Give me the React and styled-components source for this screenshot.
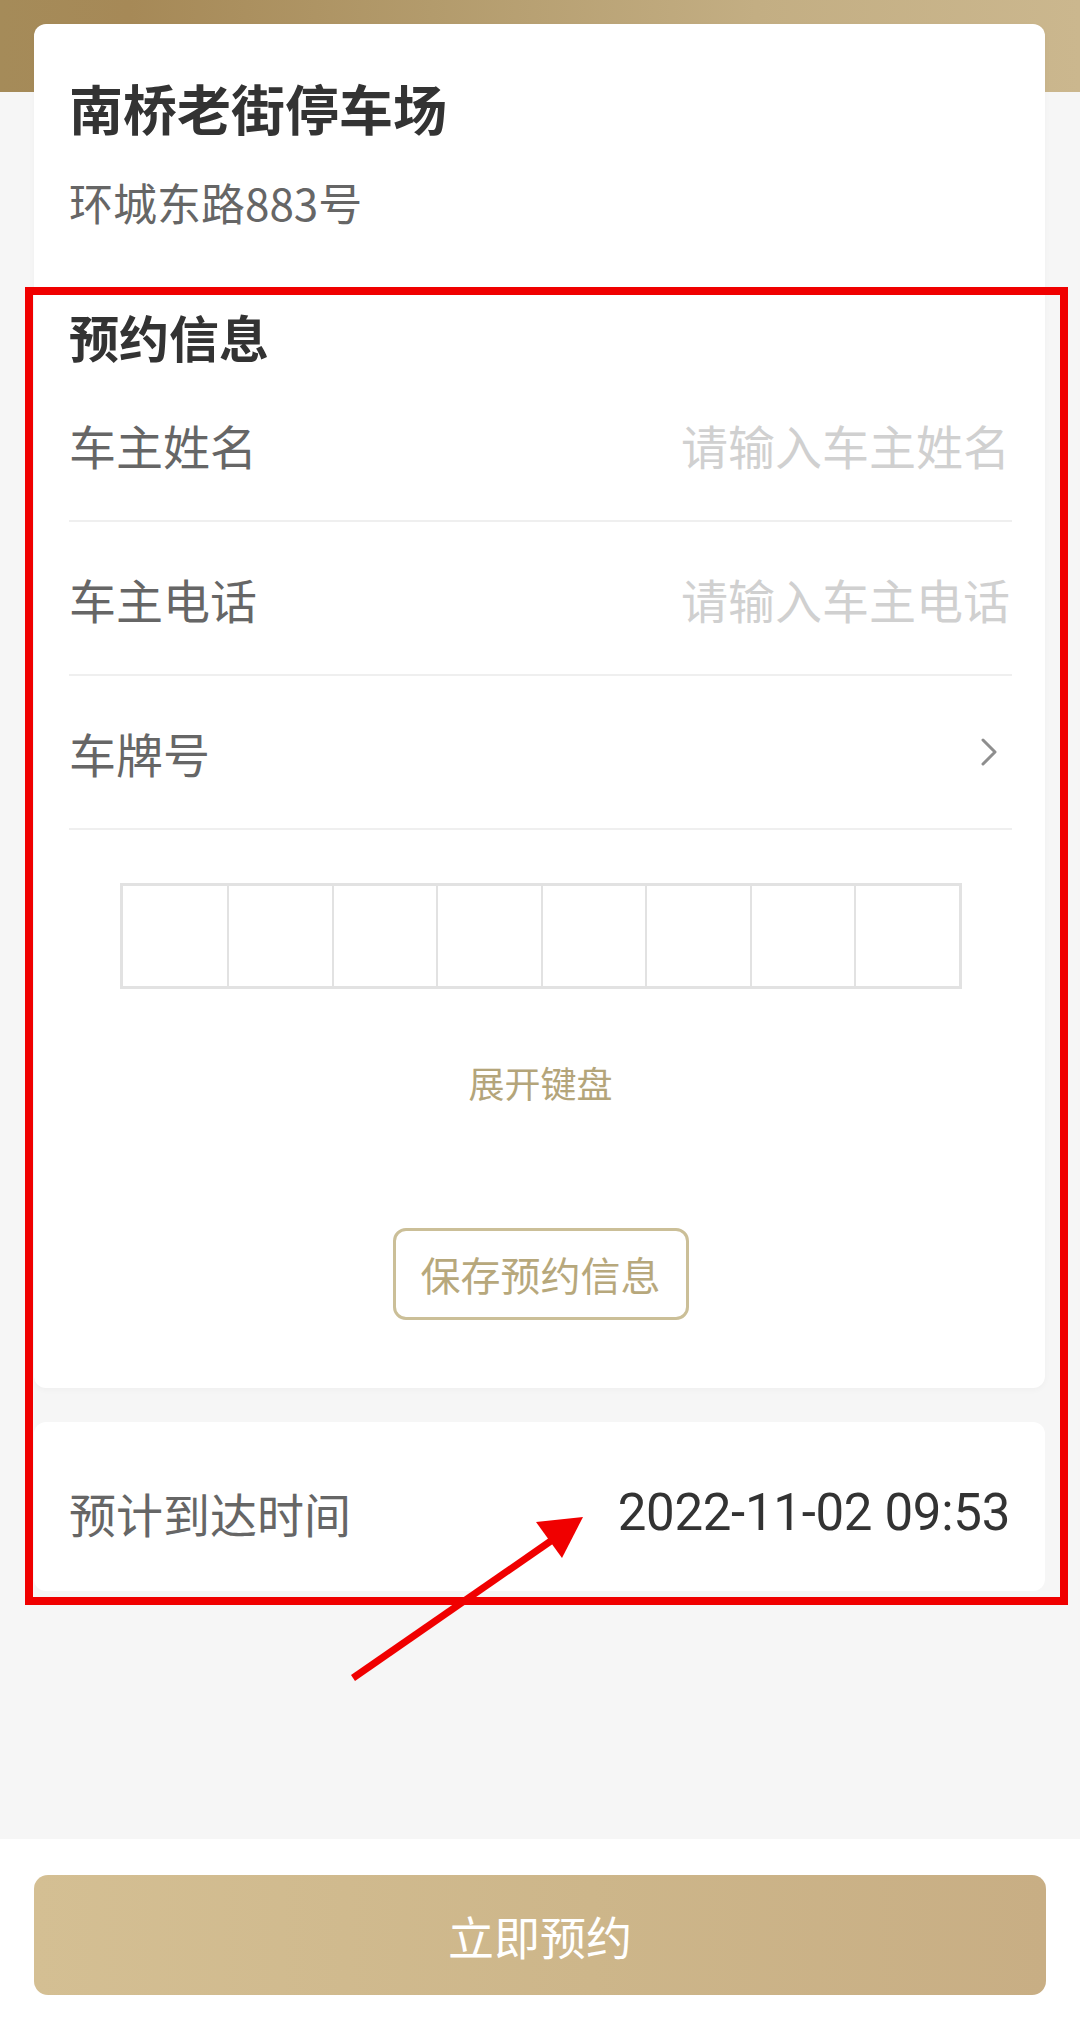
import React from 'react';
import styled, { createGlobalStyle } from 'styled-components';

const FONT = `"Noto Sans CJK SC", "Noto Sans", sans-serif`;

const GlobalStyle = createGlobalStyle`
  html, body {
    margin: 0;
    padding: 0;
    background: #f6f6f6;
    font-family: ${FONT};
  }
  * {
    box-sizing: border-box;
  }
`;

const fields = [
  { label: '车主姓名', placeholder: '请输入车主姓名' },
  { label: '车主电话', placeholder: '请输入车主电话' },
];

const Chevron = () => (
  <ChevronIcon width="17" height="28" viewBox="0 0 17 28" fill="none">
    <polyline
      points="2,2 14,14 2,26"
      stroke="#8e8e8e"
      strokeWidth="3"
      strokeLinecap="round"
      strokeLinejoin="round"
    />
  </ChevronIcon>
);

const Annotation = () => (
  <Overlay width="1080" height="2033" viewBox="0 0 1080 2033">
    <rect x="29" y="291" width="1035" height="1310" fill="none" stroke="#f00000" strokeWidth="8" />
    <line x1="353" y1="1678" x2="558" y2="1536" stroke="#f00000" strokeWidth="7" />
    <polygon points="583,1517 536,1522 562,1558" fill="#f00000" />
  </Overlay>
);

const App = () => {
  return (
    <Page>
      <GlobalStyle />
      <Main>
        <Card>
          <Title>南桥老街停车场</Title>
          <Address>环城东路883号</Address>
          <SectionTitle>预约信息</SectionTitle>
          {fields.map((f) => (
            <Row key={f.label}>
              <Label>{f.label}</Label>
              <Placeholder>{f.placeholder}</Placeholder>
            </Row>
          ))}
          <Row>
            <Label>车牌号</Label>
            <Chevron />
          </Row>
          <PlateGrid>
            {Array.from({ length: 8 }).map((_, i) => (
              <PlateCell key={i} />
            ))}
          </PlateGrid>
          <KeyboardLink>展开键盘</KeyboardLink>
          <SaveButton>保存预约信息</SaveButton>
        </Card>
        <TimeCard>
          <Label>预计到达时间</Label>
          <TimeValue>2022-11-02 09:53</TimeValue>
        </TimeCard>
      </Main>
      <BottomBar>
        <BookButton>立即预约</BookButton>
      </BottomBar>
      <Annotation />
    </Page>
  );
};

const Page = styled.div`
  position: relative;
  min-height: 100vh;
  display: flex;
  flex-direction: column;
  background: #f6f6f6;
`;

const Main = styled.main`
  flex: 1;
  padding: 24px 35px 0 34px;
  background:
    linear-gradient(90deg, #a58b59 0%, #a68957 12%, #b39b6c 40%, #c3ae83 70%, #cbb78e 100%)
    top / 100% 92px no-repeat,
    #f6f6f6;
`;

const Card = styled.section`
  display: flex;
  flex-direction: column;
  background: #fff;
  border-radius: 12px;
  padding: 48px 33px 68px 35px;
  box-shadow: 0 2px 6px rgba(0, 0, 0, 0.03);
`;

const Title = styled.h1`
  margin: 0;
  font-size: 54px;
  line-height: 72px;
  font-weight: 700;
  color: #333;
`;

const Address = styled.div`
  margin-top: 28px;
  font-size: 44px;
  line-height: 60px;
  color: #666;
`;

const SectionTitle = styled.h2`
  margin: 72px 0 0;
  font-size: 50px;
  line-height: 64px;
  font-weight: 700;
  color: #333;
`;

const Row = styled.div`
  display: flex;
  align-items: center;
  justify-content: space-between;
  height: 154px;
  border-bottom: 2px solid #efefef;
  padding-right: 2px;
`;

const ChevronIcon = styled.svg`
  margin-right: 12px;
`;

const Label = styled.span`
  font-size: 47px;
  color: #666;
`;

const Placeholder = styled.span`
  font-size: 47px;
  color: #d0d0d0;
`;

const PlateGrid = styled.div`
  align-self: center;
  display: grid;
  grid-template-columns: repeat(8, 104.5px);
  height: 106px;
  margin-top: 53px;
  border: 3px solid #e2e2e2;
`;

const PlateCell = styled.div`
  border-left: 2px solid #e2e2e2;

  &:first-child {
    border-left: none;
  }
`;

const KeyboardLink = styled.div`
  margin-top: 68px;
  text-align: center;
  font-size: 36px;
  line-height: 50px;
  color: #b4a57a;
`;

const SaveButton = styled.button`
  align-self: center;
  margin-top: 121px;
  width: 296px;
  height: 92px;
  border: 3px solid #cbbf98;
  border-radius: 13px;
  background: #fff;
  font-family: ${FONT};
  font-size: 40px;
  color: #b7a87c;
  padding: 0;
`;

const TimeCard = styled.section`
  display: flex;
  align-items: center;
  justify-content: space-between;
  margin-top: 34px;
  height: 169px;
  padding: 12px 35px 0;
  background: #fff;
  border-radius: 12px;
`;

const TimeValue = styled.span`
  font-family: Roboto, "Noto Sans", sans-serif;
  font-size: 51px;
  color: #333;
  letter-spacing: -0.3px;
`;

const BottomBar = styled.footer`
  background: #fff;
  padding: 36px 34px 38px;
`;

const BookButton = styled.button`
  display: block;
  width: 100%;
  height: 120px;
  border: none;
  border-radius: 14px;
  background: linear-gradient(90deg, #d4bf93 0%, #cdb68a 55%, #c8ae84 100%);
  font-family: ${FONT};
  font-size: 46px;
  color: #fff;
  padding: 0;
`;

const Overlay = styled.svg`
  position: absolute;
  top: 0;
  left: 0;
  pointer-events: none;
`;

export default App;
